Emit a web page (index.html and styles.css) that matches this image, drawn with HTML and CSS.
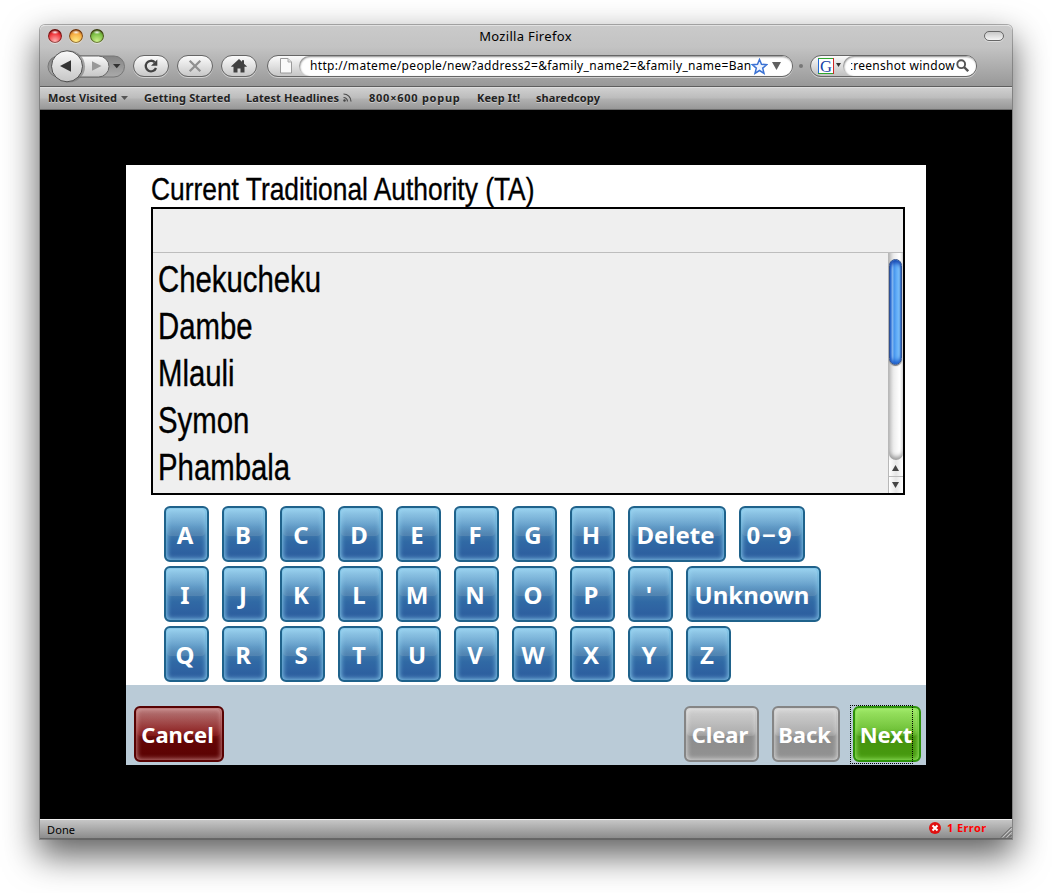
FILE: index.html
```html
<!DOCTYPE html>
<html lang="en">
<head>
<meta charset="utf-8">
<title>Mozilla Firefox</title>
<link rel="stylesheet" href="styles.css">
</head>
<body>
<div class="window">
  <header class="chrome">
    <div class="titlebar">
      <div class="lights"><i class="light red"></i><i class="light amber"></i><i class="light green"></i></div>
      <div class="title">Mozilla Firefox</div>
      <i class="lozenge"></i>
    </div>
    <div class="toolbar">
      <svg class="history" width="80" height="34" viewBox="0 0 80 34">
        <defs>
          <linearGradient id="pill" x1="0" y1="0" x2="0" y2="1"><stop offset="0" stop-color="#fbfbfb"/><stop offset=".5" stop-color="#dedede"/><stop offset="1" stop-color="#c6c6c6"/></linearGradient>
          <linearGradient id="dim" x1="0" y1="0" x2="0" y2="1"><stop offset="0" stop-color="#858585"/><stop offset="1" stop-color="#aaa"/></linearGradient>
        </defs>
        <rect x="1" y="7" width="76.500" height="21" rx="10.500" fill="url(#dim)" stroke="#777"/>
        <path d="M30 7h21.500a10.500 10.500 0 0 1 0 21H30z" fill="url(#pill)" stroke="#666"/>
        <circle cx="22" cy="17.500" r="16" fill="#777" opacity=".6"/>
        <circle cx="20" cy="17.300" r="15.500" fill="url(#pill)" stroke="#505050"/>
        <path d="M13 17L24 11.200v11.600z" fill="#333"/>
        <path d="M54.500 17L45 12.200v9.600z" fill="#999"/>
        <path d="M66 15h7.500l-3.750 4.300z" fill="#333"/>
      </svg>
      <div class="pill reload"><svg width="18" height="18" viewBox="0 0 18 18"><path d="M12.700 5.200A5.300 5.300 0 1 0 14 11" fill="none" stroke="#424242" stroke-width="2.300"/><path d="M15.300 2.500v6.300H9z" fill="#424242"/></svg></div>
      <div class="pill stop"><svg width="18" height="18" viewBox="0 0 18 18"><path d="M3.700 3.700l10.600 10.600M14.300 3.700L3.700 14.300" stroke="#909090" stroke-width="2.300"/></svg></div>
      <div class="pill home"><svg width="18" height="18" viewBox="0 0 18 18"><path d="M9 2l3 2.800V3.300h2v3.400l2.800 2.500v.6h-2.300v5.700H10.500v-4h-3v4h-4V9.800H1.200v-.6z" fill="#404040"/></svg></div>
      <div class="location">
        <svg class="page-icon" width="12" height="16" viewBox="0 0 12 16"><path d="M.5.500h7.500l3.500 3.500v11H.5z" fill="#fafafa" stroke="#9a9a9a"/><path d="M8 .5V4h3.500" fill="#ddd" stroke="#aaa"/></svg>
        <div class="field">
          <span class="url">http://mateme/people/new?address2=&amp;family_name2=&amp;family_name=Ban</span>
          <svg class="star" width="17" height="17" viewBox="0 0 17 17"><path d="M8.500 1.500l2 4.800 5.200.4-4 3.400 1.300 5.200-4.500-2.800L4 15.300l1.300-5.200-4-3.400 5.200-.4z" fill="#eef5ff" stroke="#3b72d4" stroke-width="1.500"/></svg>
          <svg class="drop" width="9" height="8" viewBox="0 0 9 8"><path d="M0 0h9L4.500 8z" fill="#606060"/></svg>
        </div>
      </div>
      <i class="dot"></i>
      <div class="search">
        <svg class="engine" width="16" height="16" viewBox="0 0 16 16"><path d="M0 0h16v16H0z" fill="#fff"/><path d="M.5 16V0" stroke="#236ad6" /><path d="M0 .5h16M0 15.500h16" stroke="#30a52d"/><path d="M15.500 0v16" stroke="#cf2525"/><text x="2" y="13.500" textLength="12" lengthAdjust="spacingAndGlyphs" class="g">G</text></svg>
        <svg class="tri" width="5" height="4" viewBox="0 0 5 4"><path d="M0 0h5L2.500 4z" fill="#333"/></svg>
        <div class="field narrow">
          <span class="query"><span>screenshot window</span></span>
          <svg class="lens" width="13" height="13" viewBox="0 0 13 13"><circle cx="5.200" cy="5.200" r="3.900" fill="#fff" stroke="#555" stroke-width="1.900"/><path d="M8 8l4.200 4.200" stroke="#555" stroke-width="2.400"/></svg>
        </div>
      </div>
    </div>
  </header>
  <nav class="bookmarks">
    <span class="bm b1">Most Visited <svg width="7" height="4" viewBox="0 0 7 4"><path d="M0 0h7L3.500 4z" fill="#555"/></svg></span>
    <span class="bm b2">Getting Started</span>
    <span class="bm b3">Latest Headlines <svg width="9" height="9" viewBox="0 0 9 9"><path d="M.5 4.500a4 4 0 0 1 4 4M.5 1a7.500 7.500 0 0 1 7.500 7.500" fill="none" stroke="#4a4a4a" stroke-width="1.200"/><circle cx="1.500" cy="7.500" r="1.200" fill="#444"/></svg></span>
    <span class="bm b4">800×600 popup</span>
    <span class="bm b5">Keep It!</span>
    <span class="bm b6">sharedcopy</span>
  </nav>
  <main class="viewport">
    <div class="page">
      <section class="question">
        <h1><span class="label">Current Traditional Authority (TA)</span></h1>
        <div class="box">
          <div class="entry"></div>
          <div class="options">
            <ul>
              <li><span>Chekucheku</span></li>
              <li><span>Dambe</span></li>
              <li><span>Mlauli</span></li>
              <li><span>Symon</span></li>
              <li><span>Phambala</span></li>
            </ul>
            <div class="scroll">
              <div class="track"><div class="thumb"></div></div>
              <div class="arrow"><svg width="7" height="6" viewBox="0 0 7 6"><path d="M0 6h7L3.500 0z" fill="#444"/></svg></div>
              <div class="arrow"><svg width="7" height="6" viewBox="0 0 7 6"><path d="M0 0h7L3.500 6z" fill="#444"/></svg></div>
            </div>
          </div>
        </div>
      </section>
      <section class="keyboard">
        <div class="row"><button class="key">A</button><button class="key">B</button><button class="key">C</button><button class="key">D</button><button class="key">E</button><button class="key">F</button><button class="key">G</button><button class="key">H</button><button class="key delete">Delete</button><button class="key digits">0−9</button></div>
        <div class="row"><button class="key">I</button><button class="key">J</button><button class="key">K</button><button class="key">L</button><button class="key">M</button><button class="key">N</button><button class="key">O</button><button class="key">P</button><button class="key">'</button><button class="key unknown">Unknown</button></div>
        <div class="row"><button class="key">Q</button><button class="key">R</button><button class="key">S</button><button class="key">T</button><button class="key">U</button><button class="key">V</button><button class="key">W</button><button class="key">X</button><button class="key">Y</button><button class="key">Z</button></div>
      </section>
      <footer class="actions">
        <button class="key cancel">Cancel</button>
        <button class="key gray clear">Clear</button>
        <button class="key gray back">Back</button>
        <button class="key next">Next</button>
      </footer>
    </div>
  </main>
  <div class="status">
    <span class="done">Done</span>
    <svg class="err-icon" width="12" height="12" viewBox="0 0 12 12"><circle cx="6" cy="6" r="6" fill="#e01010"/><path d="M3.500 3.500l5 5M8.500 3.500l-5 5" stroke="#fff" stroke-width="2"/></svg>
    <span class="error">1 Error</span>
    <svg class="grip" width="12" height="12" viewBox="0 0 12 12"><path d="M1 11.500L11.500 1M5 11.500L11.500 5M9 11.500L11.500 9" stroke="#555"/><path d="M2.300 11.500L11.500 2.300M6.300 11.500L11.500 6.300" stroke="#ddd" stroke-width=".8"/></svg>
  </div>
</div>
</body>
</html>
```
FILE: styles.css
```css
*, *::before, *::after { box-sizing: border-box; }
body {
  margin: 0;
  padding: 25px 40px 0;
  width: 1052px;
  height: 893px;
  overflow: hidden;
  background: #fff;
  font-family: "Noto Sans", "Open Sans", sans-serif;
  color: #000;
}
svg { display: block; flex: none; }
.window {
  width: 972px;
  height: 814px;
  display: flex;
  flex-direction: column;
  border-radius: 5px 5px 0 0;
  box-shadow: 0 0 0 1px rgba(70, 70, 70, .4), 0 15px 34px 2px rgba(0, 0, 0, .62);
}
.chrome {
  height: 62px;
  border-radius: 5px 5px 0 0;
  border-top: 1px solid #e2e2e2;
  border-bottom: 1px solid #5e5e5e;
  background: linear-gradient(#cacaca, #c3c3c3 35%, #989898);
}
.titlebar { height: 21px; display: flex; align-items: center; padding: 0 8px; }
.lights { display: flex; gap: 7px; width: 80px; margin-top: -1px; }
.light { width: 14px; height: 14px; border-radius: 50%; box-shadow: inset 0 0 0 1px rgba(50, 20, 10, .55), inset 0 2px 2px rgba(60, 0, 0, .4), 0 1px 0 #ddd; }
.red { background: radial-gradient(ellipse 4px 2px at 50% 23%, #fff, transparent), radial-gradient(circle at 50% 85%, #ffb0b0, #f0343a 55%, #9e1014); }
.amber { background: radial-gradient(ellipse 4px 2px at 50% 23%, #fff, transparent), radial-gradient(circle at 50% 85%, #ffec85, #f6a63c 60%, #b25a10); }
.green { background: radial-gradient(ellipse 4px 2px at 50% 23%, #fff, transparent), radial-gradient(circle at 50% 85%, #cbf08a, #72b93c 60%, #2c6c14); }
.title { flex: 1; text-align: center; font-size: 13px; line-height: 21px; letter-spacing: .32px; padding-right: 61px; }
.lozenge { width: 20px; height: 10px; margin-top: -2px; border: 1px solid #666; border-radius: 5px; background: linear-gradient(#c8c8c8, #f5f5f5); box-shadow: 0 1px 0 #ddd; }
.toolbar { height: 38px; display: flex; align-items: center; padding-left: 7px; }
.pill {
  width: 36px; height: 22px;
  border: 1px solid #666; border-radius: 11px;
  background: linear-gradient(#fbfbfb, #c8c8c8);
  box-shadow: 0 1px 0 rgba(255, 255, 255, .5);
  display: flex; align-items: center; justify-content: center;
}
.reload { margin-left: 6px; }
.stop { margin-left: 8px; }
.home { margin-left: 8px; }
.location {
  width: 526px; height: 22px; margin-left: 10px;
  border: 1px solid #666; border-radius: 11px;
  background: linear-gradient(#fbfbfb, #c6c6c6);
  box-shadow: 0 1px 0 rgba(255, 255, 255, .5);
  display: flex; align-items: center;
}
.page-icon { margin-left: 12px; }
.field {
  height: 20px; margin-left: 7px; flex: 1;
  border-radius: 10px; background: #fff;
  box-shadow: inset 1px 1px 2px #888;
  display: flex; align-items: center;
}
.url { font-size: 12px; line-height: 20px; width: 443px; margin-left: 11px; white-space: nowrap; overflow: hidden; letter-spacing: .32px; }
.star { margin-left: -2px; }
.drop { margin-left: 4px; }
.dot { width: 4px; height: 4px; margin-left: 6px; border-radius: 50%; background: #777; }
.search {
  width: 167px; height: 22px; margin-left: 7px;
  border: 1px solid #666; border-radius: 11px;
  background: linear-gradient(#fbfbfb, #c0c0c0);
  box-shadow: 0 1px 0 rgba(255, 255, 255, .5);
  display: flex; align-items: center;
}
.engine { margin-left: 7px; }
.g { font: 17px "Liberation Serif", serif; fill: #173fa6; }
.tri { margin-left: 2px; margin-top: -3px; }
.field.narrow { margin-left: 2px; }
.query { width: 104px; margin-left: 8px; display: flex; justify-content: flex-end; overflow: hidden; white-space: nowrap; font-size: 12px; line-height: 20px; letter-spacing: .3px; }
.lens { margin-left: 1px; margin-top: -2px; }
.bookmarks {
  height: 23px;
  border-top: 1px solid #dedede; border-bottom: 1px solid #6e6e6e;
  background: linear-gradient(#cfcfcf, #bdbdbd 45%, #b0b0b0 55%, #989898);
  display: flex; align-items: center; padding: 0 0 2px 8px;
  font: bold 11px/19px "Noto Sans", sans-serif; color: #222;
  text-shadow: 0 1px 0 rgba(255, 255, 255, .4);
}
.bm { display: flex; align-items: center; gap: 4px; white-space: nowrap; letter-spacing: .1px; }
.b1 { width: 96px; }
.b2 { width: 102px; }
.b3 { width: 123px; }
.b4 { width: 108px; letter-spacing: .75px; }
.b5 { width: 59px; }
.b6 { letter-spacing: .1px; }
.viewport { height: 709px; padding: 55px 86px 0; background: #000; }
.page { width: 800px; height: 600px; background: #fff; display: flex; flex-direction: column; }
.question { height: 330px; padding: 0 21px 0 25px; font-family: "Liberation Sans", Arial, sans-serif; -webkit-text-stroke: .35px #000; }
h1 { margin: 0; height: 42px; font-size: 32px; font-weight: normal; line-height: 48px; white-space: nowrap; }
.label { display: inline-block; transform: scaleX(.824); transform-origin: 0 0; }
.box { width: 754px; height: 288px; border: 2px solid #000; background: #efefef; }
.entry { height: 44px; border-bottom: 1px solid #bdbdbd; }
.options { height: 240px; display: flex; justify-content: space-between; }
ul { list-style: none; margin: 0; padding: 3px 0 0 5px; }
li { height: 47px; font-size: 36px; line-height: 47px; white-space: nowrap; }
li span { display: inline-block; transform: scaleX(.815); transform-origin: 0 0; }
.scroll { width: 15px; border-left: 1px solid #b8b8b8; background: #f4f4f4; display: flex; flex-direction: column; }
.track { height: 207px; padding: 6px 1px 0 0; border-radius: 0 0 7px 7px; background: linear-gradient(90deg, #c9c9c9, #eee 35%, #fff 75%, #eee); box-shadow: inset 0 -4px 4px -1px #999; }
.thumb {
  height: 106px; border-radius: 7px; border: 1px solid #30508f;
  background: linear-gradient(90deg, #2d6fd6, #8fc0f5 22%, #4795ec 38%, #67b2fa 65%, #8dd0ff 85%, #3874c5);
  box-shadow: inset 0 4px 4px -1px #1746b0, inset 0 -4px 4px -1px #1f60cc, 0 1px 1px #777;
}
.arrow { flex: 1; display: flex; align-items: center; justify-content: center; padding-right: 1px; background: linear-gradient(90deg, #fff, #e6e6e6 50%, #fff); }
.arrow + .arrow { border-top: 1px solid #bbb; }
.keyboard { height: 190px; padding: 11px 0 0 38px; display: flex; flex-direction: column; gap: 4px; }
.row { display: flex; gap: 13px; }
.key {
  position: relative;
  flex: none;
  width: 45px; height: 56px; margin: 0; padding: 2px 3px 0 0;
  border: 2px solid #1f628b; border-radius: 6px;
  background: linear-gradient(#82bde0, #5b97c5 35%, #3f78ab 50%, #3069a5 65%, #2c5b9d);
  box-shadow: inset 0 0 5px 1px rgba(145, 215, 245, .85);
  color: #fff; font: bold 24px/50px "Noto Sans", sans-serif; text-align: center; white-space: nowrap;
  z-index: 0;
}
/* glossy highlight over the upper half */
.key::before {
  content: ""; position: absolute; z-index: -1; left: 1px; right: 2px; top: 1px; height: 27px;
  border-radius: 4px;
  background: linear-gradient(rgba(170, 220, 245, .5), rgba(140, 185, 215, .16) 65%, rgba(150, 180, 205, .24));
}
.delete { width: 98px; }
.digits { width: 66px; padding-right: 4px; letter-spacing: 1.8px; }
.unknown { width: 135px; }
.actions { height: 80px; padding: 21px 5px 0 8px; background: #bacbd7; display: flex; align-items: flex-start; }
.actions .key { padding-top: 0; font-size: 22px; line-height: 52px; letter-spacing: -.05px; }
.actions .cancel { width: 90px; border-color: #580303; background: linear-gradient(#a96060, #862525 40%, #640606 60%, #5a0202); box-shadow: inset 0 0 5px 1px rgba(225, 165, 165, .75); }
.actions .gray { border-color: #858585; background: linear-gradient(#c2c2c2, #a3a3a3 45%, #8d8d8d 55%, #929292); box-shadow: inset 0 0 5px 1px rgba(230, 230, 230, .8); }
.cancel::before { background: linear-gradient(rgba(255, 255, 255, .17), rgba(255, 80, 80, .12)); }
.gray::before { background: linear-gradient(rgba(255, 255, 255, .25), rgba(255, 255, 255, .12)); }
.next::before { background: linear-gradient(rgba(190, 255, 130, .4), rgba(160, 235, 100, .15)); }
.clear { width: 75px; margin-left: auto; }
.back { width: 68px; margin-left: 13px; }
.actions .next { width: 68px; margin-left: 13px; padding-right: 2px; border-color: #2d9209; background: linear-gradient(#84d34f, #62b62c 40%, #45930f 55%, #479b0f); box-shadow: inset 0 0 5px 1px rgba(160, 240, 110, .85); }
.next::after { content: ""; position: absolute; left: -5px; top: -3px; width: 63px; height: 59px; border: 1px dotted #000; }
.status {
  height: 20px; display: flex; align-items: center; padding-left: 7px;
  border-top: 1px solid #eee; border-bottom: 1px solid #666;
  background: linear-gradient(#c6c6c6, #8c8c8c);
  font-size: 11px; line-height: 18px;
}
.done { flex: 1; padding-top: 1px; letter-spacing: .1px; }
.err-icon { margin-top: -2px; }
.error { width: 41px; margin: -2px 0 0 6px; color: #f00; font-weight: bold; white-space: nowrap; letter-spacing: .4px; }
.grip { margin: 5px 0 0 12px; }
```
